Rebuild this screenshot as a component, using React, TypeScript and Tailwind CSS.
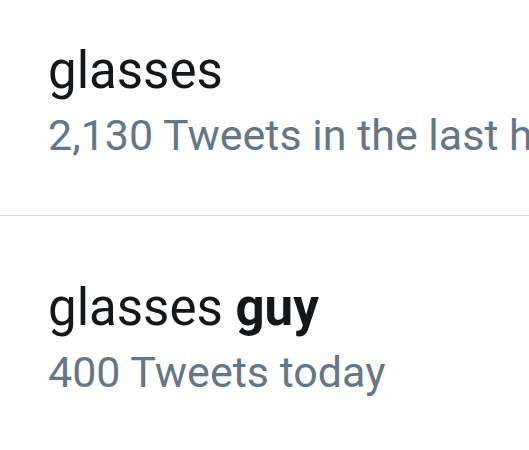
export default function App() {
  return (
    <div className="h-[450px] w-[529px] overflow-hidden bg-white font-['Roboto',sans-serif]">
      <div className="whitespace-nowrap pl-[48px] pt-[41px] pb-[54px]">
        <div className="text-[51px] leading-[60px] text-[#14171a]">glasses</div>
        <div className="mt-[8px] text-[43px] leading-[52px] text-[#657786]">2,130 Tweets in the last hour</div>
      </div>
      <hr className="border-t border-[#d9dde0]" />
      <div className="whitespace-nowrap pl-[48px] pt-[62px]">
        <div className="text-[51px] leading-[60px] text-[#14171a]">
          glasses <span className="font-bold">guy</span>
        </div>
        <div className="mt-[8px] text-[43px] leading-[52px] text-[#657786]">400 Tweets today</div>
      </div>
    </div>
  )
}
